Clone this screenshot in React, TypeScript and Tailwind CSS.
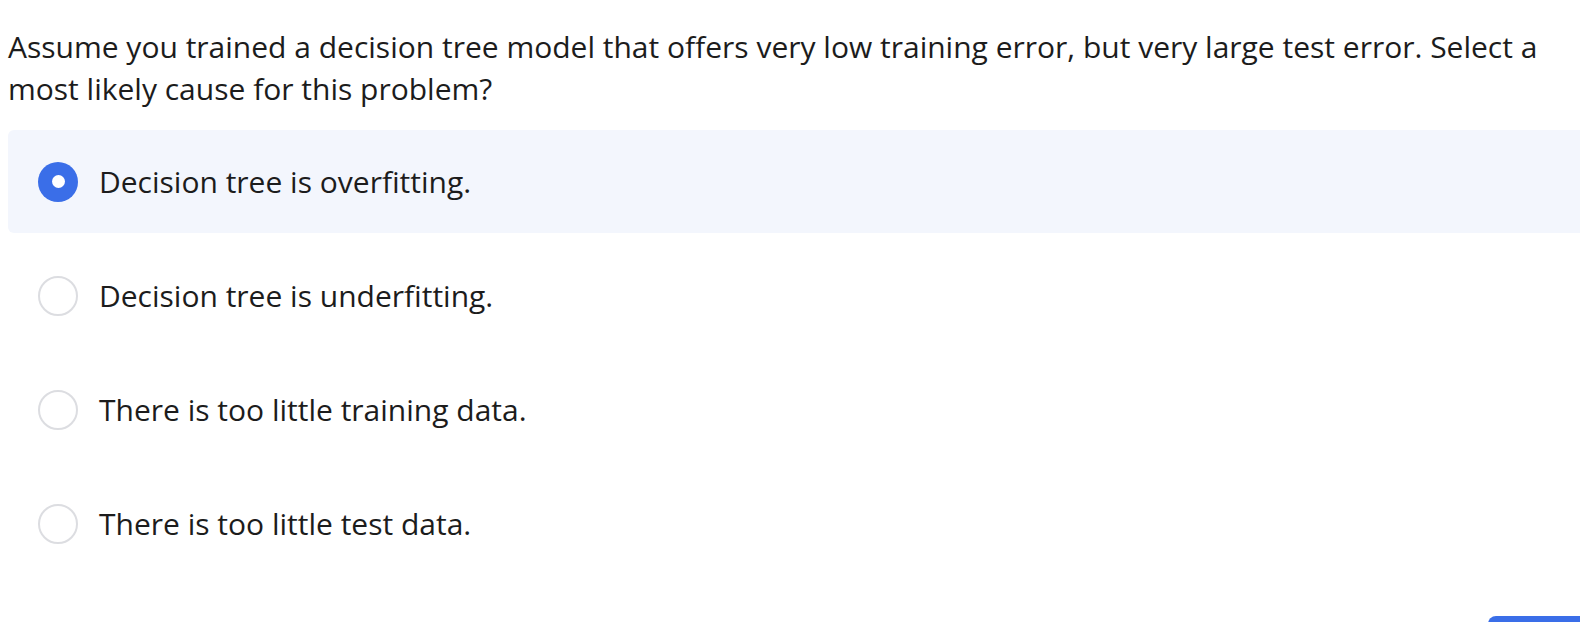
export default function App() {
  const options = [
    'Decision tree is overfitting.',
    'Decision tree is underfitting.',
    'There is too little training data.',
    'There is too little test data.',
  ];
  const selected = 0;

  return (
    <div className="w-[1580px] h-[622px] overflow-hidden bg-white text-[#1c1c1c] font-['Open_Sans',sans-serif] relative">
      <p className="pl-[8px] pt-[26px] pr-[8px] text-[30px] leading-[42px]">
        Assume you trained a decision tree model that offers very low training error, but very large test error. Select a most likely cause for this problem?
      </p>
      <div className="mt-[20px] ml-[8px] flex flex-col gap-[11px]">
        {options.map((opt, i) => (
          <div
            key={opt}
            className={`h-[103px] flex items-center pl-[30px] rounded-l-[6px] ${i === selected ? 'bg-[#f3f6fd]' : ''}`}
          >
            {i === selected ? (
              <span className="w-[40px] h-[40px] rounded-full bg-[#3a6ee8] flex items-center justify-center shrink-0">
                <span className="w-[13px] h-[13px] rounded-full bg-white" />
              </span>
            ) : (
              <span className="w-[40px] h-[40px] rounded-full border-2 border-[#dcdde1] bg-white shrink-0" />
            )}
            <span className="ml-[21px] text-[30px]">{opt}</span>
          </div>
        ))}
      </div>
      <div className="absolute left-[1488px] top-[616px] w-[120px] h-[40px] rounded-[8px] bg-[#3a6ee8]" />
    </div>
  );
}
